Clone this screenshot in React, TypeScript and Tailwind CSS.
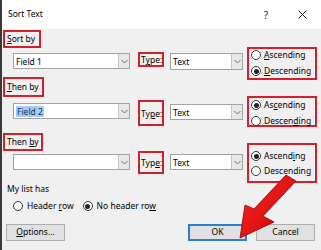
import React from "react";

const RED = "border-2 border-[#d3202a]";

function Chevron() {
  return (
    <svg width="7" height="5" viewBox="0 0 7 5">
      <path d="M0.5 1 L3.5 4 L6.5 1" fill="none" stroke="#6a6a6a" strokeWidth="1" />
    </svg>
  );
}

function Combo({
  w,
  h,
  mt,
  ml,
  value,
  hl,
}: {
  w: string;
  h: string;
  mt: string;
  ml: string;
  value?: string;
  hl?: boolean;
}) {
  return (
    <div className={`${w} ${h} ${mt} ${ml} flex shrink-0 border border-[#a3a3a3] bg-white`}>
      <div className="flex flex-1 items-center pl-[2px]">
        {value ? (
          hl ? (
            <span className="bg-[#a6cdf2] px-[1px] leading-[11px] text-[#14305e]">{value}</span>
          ) : (
            <span className="leading-[11px]">{value}</span>
          )
        ) : null}
      </div>
      <div className="flex w-[11px] items-center justify-center border-l border-[#c4c4c4] bg-[#e8e8e8]">
        <Chevron />
      </div>
    </div>
  );
}

function Radio({ checked }: { checked?: boolean }) {
  return (
    <div className="flex h-[10px] w-[10px] shrink-0 items-center justify-center rounded-full border border-[#333] bg-white">
      {checked ? <div className="h-[5px] w-[5px] rounded-full bg-[#222]" /> : null}
    </div>
  );
}

function RadioItem({ checked, children }: { checked?: boolean; children: React.ReactNode }) {
  return (
    <div className="flex h-[12px] items-center gap-[3px]">
      <Radio checked={checked} />
      <span className="leading-[12px]">{children}</span>
    </div>
  );
}

function TypeBox({ mt, h, children }: { mt: string; h: string; children: React.ReactNode }) {
  return (
    <div className={`${RED} ${mt} ${h} ml-[8px] flex w-[26px] shrink-0 items-center pl-[1px]`}>
      <span className="leading-[11px]">{children}</span>
    </div>
  );
}

export default function App() {
  return (
    <div
      className="relative flex h-[250px] w-[321px] flex-col overflow-hidden border-l-2 border-[#3a3a3a] bg-[#f0f0f0] text-[8.5px] text-black"
      style={{ fontFamily: '"Noto Sans", "Open Sans", sans-serif' }}
    >
      {/* Title bar */}
      <div className="flex h-[29px] shrink-0 items-center bg-white pl-[6px]">
        <span className="text-[8.5px] leading-none">Sort Text</span>
        <span className="ml-auto mr-[30px] text-[10px] leading-none text-[#222]">?</span>
        <svg width="9" height="9" viewBox="0 0 9 9" className="mr-[14px]">
          <path d="M0.5 0.5 L8.5 8.5 M8.5 0.5 L0.5 8.5" stroke="#222" strokeWidth="1" />
        </svg>
      </div>

      {/* Sort by */}
      <div className={`${RED} ml-[1px] mt-[1px] flex h-[18px] w-[38px] shrink-0 items-center pl-[2px]`}>
        <span className="leading-none">
          <u className="underline-offset-1">S</u>ort by
        </span>
      </div>
      <div className="flex h-[29px] shrink-0 items-start">
        <Combo w="w-[117px]" h="h-[16px]" mt="mt-[5px]" ml="ml-[11px]" value="Field 1" />
        <TypeBox mt="mt-[4px]" h="h-[15px]">
          T<u className="underline-offset-1">y</u>pe:
        </TypeBox>
        <Combo w="w-[73px]" h="h-[17px]" mt="mt-[5px]" ml="ml-[6px]" value="Text" />
        <div className={`${RED} -mt-[1px] ml-[4px] flex h-[33px] w-[70px] shrink-0 flex-col gap-[4px] pl-[2px]`}>
          <RadioItem>
            <u className="underline-offset-1">A</u>scending
          </RadioItem>
          <RadioItem checked>
            <u className="underline-offset-1">D</u>escending
          </RadioItem>
        </div>
      </div>

      {/* Then by */}
      <div className={`${RED} ml-[1px] flex h-[20px] w-[41px] shrink-0 items-center pl-[2px]`}>
        <span className="leading-none">
          <u className="underline-offset-1">T</u>hen by
        </span>
      </div>
      <div className="flex h-[36px] shrink-0 items-start">
        <Combo w="w-[117px]" h="h-[16px]" mt="mt-[6px]" ml="ml-[11px]" value="Field 2" hl />
        <TypeBox mt="mt-[3px]" h="h-[26px]">
          Ty<u className="underline-offset-1">p</u>e:
        </TypeBox>
        <Combo w="w-[73px]" h="h-[16px]" mt="mt-[7px]" ml="ml-[6px]" value="Text" />
        <div className={`${RED} -mt-[1px] ml-[4px] flex h-[31px] w-[70px] shrink-0 flex-col gap-[4px] pl-[2px] pt-[1px]`}>
          <RadioItem checked>
            As<u className="underline-offset-1">c</u>ending
          </RadioItem>
          <RadioItem>
            Descen<u className="underline-offset-1">d</u>ing
          </RadioItem>
        </div>
      </div>

      {/* Then by 2 */}
      <div className={`${RED} ml-[1px] flex h-[18px] w-[40px] shrink-0 items-center pl-[2px]`}>
        <span className="leading-none">
          Then <u className="underline-offset-1">b</u>y
        </span>
      </div>
      <div className="flex h-[32px] shrink-0 items-start">
        <Combo w="w-[117px]" h="h-[16px]" mt="mt-[3px]" ml="ml-[11px]" />
        <TypeBox mt="mt-0" h="h-[23px]">
          Typ<u className="underline-offset-1">e</u>:
        </TypeBox>
        <Combo w="w-[73px]" h="h-[16px]" mt="mt-[3px]" ml="ml-[6px]" value="Text" />
        <div className={`${RED} -mt-[8px] ml-[4px] flex h-[40px] w-[70px] shrink-0 flex-col gap-[3px] pl-[2px] pt-[5px]`}>
          <RadioItem checked>
            Ascend<u className="underline-offset-1">i</u>ng
          </RadioItem>
          <RadioItem>
            Descendin<u className="underline-offset-1">g</u>
          </RadioItem>
        </div>
      </div>

      {/* My list has */}
      <div className="ml-[5px] flex h-[13px] shrink-0 items-center">
        <span className="leading-none">My list has</span>
      </div>
      <div className="flex h-[20px] shrink-0 items-center">
        <div className="ml-[11px] flex items-center gap-[4px]">
          <Radio />
          <span className="leading-none">
            Header <u className="underline-offset-1">r</u>ow
          </span>
        </div>
        <div className="ml-[9px] flex items-center gap-[4px]">
          <Radio checked />
          <span className="leading-none">
            No header ro<u className="underline-offset-1">w</u>
          </span>
        </div>
      </div>

      {/* Buttons */}
      <div className="mt-[8px] flex h-[17px] shrink-0">
        <div className="ml-[4px] flex w-[59px] items-center justify-center border border-[#adadad] bg-[#e1e1e1]">
          <span className="leading-none">
            <u className="underline-offset-1">O</u>ptions...
          </span>
        </div>
        <div className="ml-auto flex w-[59px] items-center justify-center border-2 border-[#2a7fd0] bg-[#e1e1e1]">
          <span className="leading-none">OK</span>
        </div>
        <div className="ml-[9px] mr-[6px] flex w-[59px] items-center justify-center border border-[#adadad] bg-[#e1e1e1]">
          <span className="leading-none">Cancel</span>
        </div>
      </div>

      {/* Red arrow annotation */}
      <svg className="pointer-events-none absolute left-0 top-0" width="321" height="250" viewBox="0 0 321 250">
        <defs>
          <linearGradient id="ag" x1="0" y1="0" x2="1" y2="1">
            <stop offset="0" stopColor="#ff2a2a" />
            <stop offset="1" stopColor="#c80000" />
          </linearGradient>
        </defs>
        <polygon
          points="284,175 252,209 243,205 238,238 272,222 261,216 294,181"
          fill="url(#ag)"
          stroke="#8c0000"
          strokeWidth="0.8"
          strokeLinejoin="round"
        />
      </svg>
    </div>
  );
}
